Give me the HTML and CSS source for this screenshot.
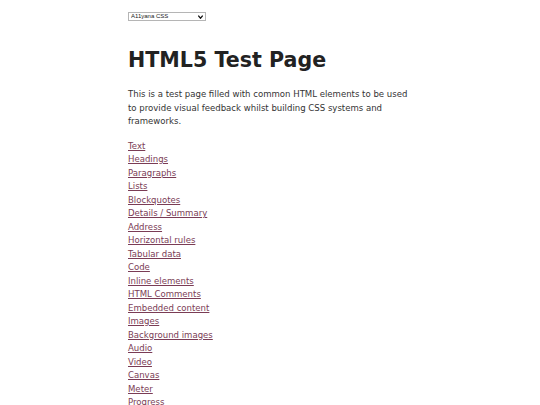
FILE: index.html
```html
<!DOCTYPE html>
<html lang="en">
<head>
<meta charset="utf-8">
<title>HTML5 Test Page</title>
<link rel="stylesheet" href="styles.css">
</head>
<body>
<div class="page">
  <div class="switcher">
    <select class="theme-select">
      <option>A11yana CSS</option>
    </select>
    <svg class="select-arrow" width="5" height="4" viewBox="0 0 5 4" aria-hidden="true">
      <path d="M0.3 0.6 L2.5 3.2 L4.7 0.6" fill="none" stroke="#111" stroke-width="1.3"/>
    </svg>
  </div>
  <h1 class="title">HTML5 Test Page</h1>
  <p class="intro">This is a test page filled with common HTML elements to be used to provide visual feedback whilst building CSS systems and frameworks.</p>
  <ul class="toc">
    <li><a href="#text">Text</a></li>
    <li><a href="#headings">Headings</a></li>
    <li><a href="#paragraphs">Paragraphs</a></li>
    <li><a href="#lists">Lists</a></li>
    <li><a href="#blockquotes">Blockquotes</a></li>
    <li><a href="#details">Details / Summary</a></li>
    <li><a href="#address">Address</a></li>
    <li><a href="#hr">Horizontal rules</a></li>
    <li><a href="#tables">Tabular data</a></li>
    <li><a href="#code">Code</a></li>
    <li><a href="#inline">Inline elements</a></li>
    <li><a href="#comments">HTML Comments</a></li>
    <li><a href="#embedded">Embedded content</a></li>
    <li><a href="#images">Images</a></li>
    <li><a href="#bgimages">Background images</a></li>
    <li><a href="#audio">Audio</a></li>
    <li><a href="#video">Video</a></li>
    <li><a href="#canvas">Canvas</a></li>
    <li><a href="#meter">Meter</a></li>
    <li><a href="#progress">Progress</a></li>
  </ul>
</div>
</body>
</html>
```
FILE: styles.css
```css
html, body {
  margin: 0;
  padding: 0;
  background: #fff;
}
body {
  font-family: "DejaVu Sans", sans-serif;
  font-size: 8.55px;
  line-height: 13.5px;
  color: #333;
}
.page {
  width: 284px;
  margin: 0 auto;
  padding-top: 12px;
}
.switcher {
  position: relative;
  display: flex;
  width: 78px;
}
.theme-select {
  -webkit-appearance: none;
  appearance: none;
  font-family: "Liberation Sans", Arial, sans-serif;
  font-size: 6px;
  line-height: 7px;
  width: 78px;
  height: 9px;
  padding: 0 0 0 2px;
  margin: 0;
  border: 1px solid #b5b5b5;
  border-radius: 0;
  background: #fff;
  color: #222;
}
.select-arrow {
  position: absolute;
  right: 3px;
  top: 2.5px;
  pointer-events: none;
}
.title {
  font-size: 20.6px;
  line-height: 25px;
  font-weight: bold;
  color: #222;
  margin: 27px 0 0;
}
.intro {
  margin: 15px 0 0;
}
.toc {
  list-style: none;
  margin: 11px 0 0;
  padding: 0;
}
.toc a {
  color: #7a3c55;
}
```
